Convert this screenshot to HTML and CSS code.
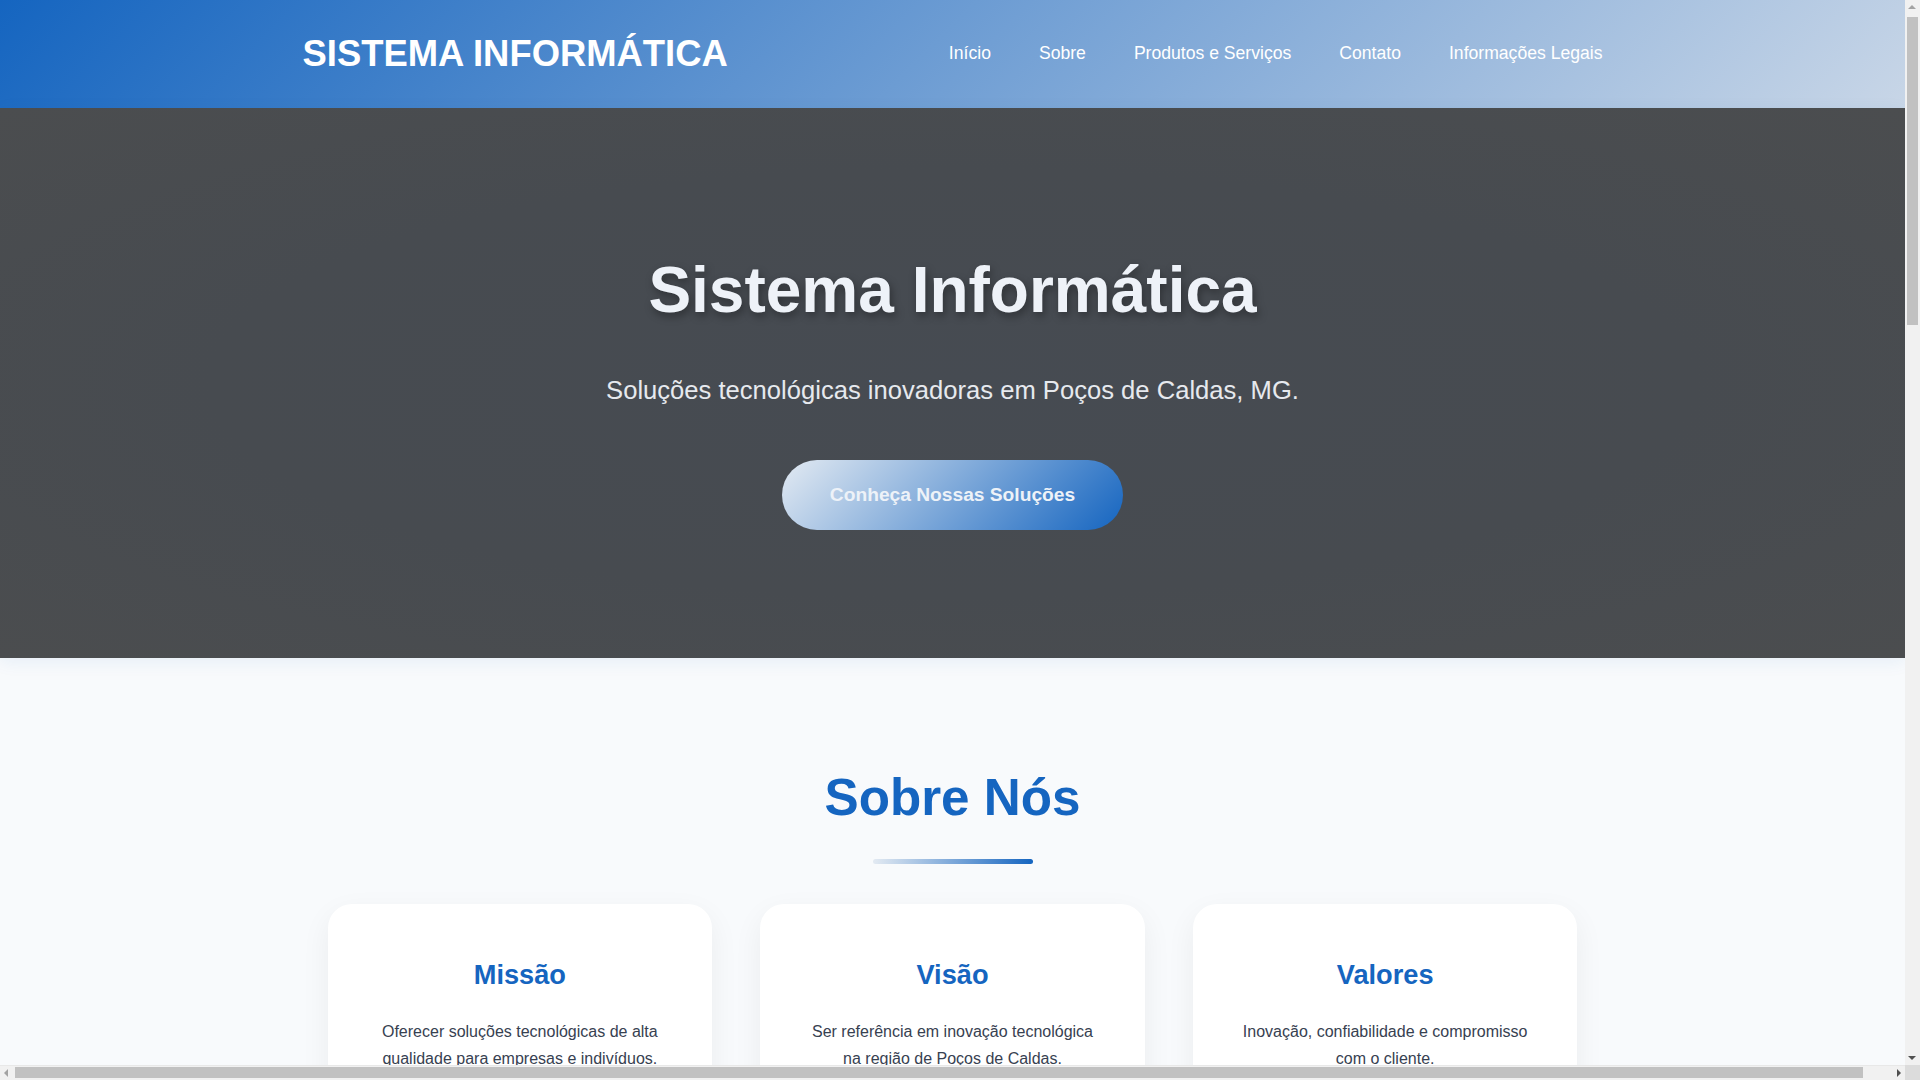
FILE: index.html
```html
<!DOCTYPE html>
<html lang="pt-BR">
<head>
<meta charset="utf-8">
<title>Sistema Informática</title>
<link rel="stylesheet" href="styles.css">
</head>
<body>
<header class="site-header">
  <div class="container header-inner">
    <div class="logo">SISTEMA INFORMÁTICA</div>
    <nav class="nav">
      <a href="#inicio">Início</a>
      <a href="#sobre">Sobre</a>
      <a href="#produtos">Produtos e Serviços</a>
      <a href="#contato">Contato</a>
      <a href="#legal">Informações Legais</a>
    </nav>
  </div>
</header>

<section class="hero" id="inicio">
  <h1 class="hero-title">Sistema Informática</h1>
  <p class="hero-subtitle">Soluções tecnológicas inovadoras em Poços de Caldas, MG.</p>
  <div class="hero-actions">
    <a class="btn" href="#produtos">Conheça Nossas Soluções</a>
  </div>
</section>

<section class="about" id="sobre">
  <h2 class="section-title">Sobre Nós</h2>
  <div class="title-bar"></div>
  <div class="cards">
    <div class="card">
      <h3>Missão</h3>
      <p>Oferecer soluções tecnológicas de alta qualidade para empresas e indivíduos.</p>
    </div>
    <div class="card">
      <h3>Visão</h3>
      <p>Ser referência em inovação tecnológica na região de Poços de Caldas.</p>
    </div>
    <div class="card">
      <h3>Valores</h3>
      <p>Inovação, confiabilidade e compromisso com o cliente.</p>
    </div>
  </div>
</section>

<section class="products" id="produtos">
  <h2 class="section-title">Produtos e Serviços</h2>
  <div class="title-bar"></div>
  <div class="cards">
    <div class="card">
      <h3>Desenvolvimento</h3>
      <p>Sistemas sob medida, aplicativos web e soluções integradas para o seu negócio.</p>
    </div>
    <div class="card">
      <h3>Suporte Técnico</h3>
      <p>Manutenção de computadores, redes e atendimento rápido e eficiente.</p>
    </div>
    <div class="card">
      <h3>Consultoria</h3>
      <p>Planejamento de infraestrutura e transformação digital para empresas.</p>
    </div>
    <div class="card">
      <h3>Hospedagem</h3>
      <p>Servidores, e-mails corporativos e backup em nuvem com segurança.</p>
    </div>
    <div class="card">
      <h3>Segurança</h3>
      <p>Proteção de dados, firewalls e monitoramento contínuo.</p>
    </div>
    <div class="card">
      <h3>Treinamento</h3>
      <p>Capacitação de equipes no uso de ferramentas e sistemas.</p>
    </div>
  </div>
</section>

<section class="contact" id="contato">
  <h2 class="section-title">Contato</h2>
  <div class="title-bar"></div>
  <div class="contact-box">
    <p>Poços de Caldas, MG</p>
    <p>contato@sistemainformatica.com.br</p>
    <p>(35) 3700-0000</p>
  </div>
</section>

<footer class="site-footer" id="legal">
  <p>© 2024 Sistema Informática. Todos os direitos reservados.</p>
  <p>Informações Legais · Política de Privacidade · Termos de Uso</p>
</footer>

<div class="scrollbar-v" aria-hidden="true">
  <span class="arrow arrow-up"></span>
  <span class="thumb-v"></span>
  <span class="arrow arrow-down"></span>
</div>
<div class="scrollbar-h" aria-hidden="true">
  <span class="arrow arrow-left"></span>
  <span class="thumb-h"></span>
  <span class="arrow arrow-right"></span>
</div>
<div class="scrollbar-corner" aria-hidden="true"></div>
</body>
</html>
```

FILE: styles.css
```css
* {
  box-sizing: border-box;
  margin: 0;
  padding: 0;
}

body {
  font-family: "Liberation Sans", Arial, sans-serif;
  line-height: 1.7;
  color: #374151;
  background: #f8fafc;
  margin-right: 15px;
}

.container {
  width: 100%;
  max-width: 1300px;
  margin: 0 auto;
}

/* Header */
.site-header {
  height: 108px;
  display: flex;
  align-items: center;
  background: linear-gradient(135deg, #1565c0 0%, #c8d6e7 100%);
}

.header-inner {
  display: flex;
  justify-content: space-between;
  align-items: center;
}

.logo {
  font-size: 36.4px;
  font-weight: 700;
  line-height: 1.2;
  color: #ffffff;
}

.nav {
  display: flex;
  gap: 48px;
}

.nav a {
  color: #ffffff;
  text-decoration: none;
  font-size: 17.6px;
  line-height: 1.2;
}

/* Hero */
.hero {
  padding: 144px 20px 128px;
  text-align: center;
  background: radial-gradient(ellipse at center, #464b52 0%, #474b50 55%, #4b4d4f 100%);
  box-shadow: 0 4px 16px rgba(21, 101, 192, 0.08);
  position: relative;
}

.hero-title {
  font-size: 64px;
  line-height: 1.2;
  font-weight: 700;
  color: #eef2f8;
  text-shadow: 2px 4px 8px rgba(0, 0, 0, 0.35);
  margin-bottom: 40.5px;
}

.hero-subtitle {
  font-size: 25.6px;
  line-height: 1.7;
  color: #e6e9ee;
  margin-bottom: 47.7px;
}

.hero-actions {
  display: flex;
  justify-content: center;
}

.btn {
  display: block;
  padding: 24px 48px;
  font-size: 19.2px;
  line-height: 22px;
  font-weight: 700;
  color: #edf2f8;
  text-decoration: none;
  border-radius: 50px;
  background: linear-gradient(135deg, #e3eaf2 0%, #1565c0 100%);
}

/* Sections */
.about,
.products,
.contact {
  padding: 109px 20px 96px;
}

.section-title {
  font-size: 51.2px;
  line-height: 1.2;
  font-weight: 700;
  color: #1565c0;
  text-align: center;
}

.title-bar {
  width: 160px;
  height: 5px;
  margin: 30.5px auto 0;
  border-radius: 3px;
  background: linear-gradient(90deg, #e3eaf2 0%, #1565c0 100%);
}

.cards {
  max-width: 1250px;
  margin: 39.5px auto 0;
  display: grid;
  grid-template-columns: repeat(3, 1fr);
  gap: 48px;
}

.card {
  background: #ffffff;
  border-radius: 24px;
  padding: 48px;
  text-align: center;
  box-shadow: 0 10px 30px rgba(0, 0, 0, 0.06);
}

.card h3 {
  font-size: 27.2px;
  line-height: 1.7;
  font-weight: 700;
  color: #1565c0;
  margin-bottom: 20px;
}

.card p {
  font-size: 16px;
  line-height: 1.7;
  color: #374151;
}

.products {
  background: #ffffff;
}

.contact-box {
  max-width: 700px;
  margin: 39.5px auto 0;
  padding: 48px;
  background: #ffffff;
  border-radius: 24px;
  text-align: center;
  box-shadow: 0 10px 30px rgba(0, 0, 0, 0.06);
  font-size: 18px;
}

.site-footer {
  padding: 48px 20px;
  text-align: center;
  color: #e6e9ee;
  background: #474b50;
  font-size: 15px;
}

/* Browser scrollbars as shown in the capture */
.scrollbar-v {
  position: fixed;
  top: 0;
  right: 0;
  width: 15px;
  height: calc(100vh - 15px);
  background: #f1f1f1;
  z-index: 10;
}

.thumb-v {
  position: absolute;
  top: 17px;
  left: 2px;
  width: 11px;
  height: 308px;
  background: #c1c1c1;
}

.scrollbar-h {
  position: fixed;
  left: 0;
  bottom: 0;
  width: calc(100vw - 15px);
  height: 15px;
  background: #f1f1f1;
  border-top: 1px solid #e8e8e8;
  z-index: 10;
}

.thumb-h {
  position: absolute;
  top: 1px;
  left: 15px;
  width: 1848px;
  height: 11px;
  background: #c1c1c1;
}

.scrollbar-corner {
  position: fixed;
  right: 0;
  bottom: 0;
  width: 15px;
  height: 15px;
  background: #dcdcdc;
  z-index: 10;
}

.arrow {
  position: absolute;
  width: 0;
  height: 0;
  border-style: solid;
}

.arrow-up {
  top: 5px;
  left: 3px;
  border-width: 0 4px 4px 4px;
  border-color: transparent transparent #a3a3a3 transparent;
}

.arrow-down {
  bottom: 5px;
  left: 3px;
  border-width: 4px 4px 0 4px;
  border-color: #505050 transparent transparent transparent;
}

.arrow-left {
  left: 4px;
  top: 3px;
  border-width: 4px 4px 4px 0;
  border-color: transparent #a3a3a3 transparent transparent;
}

.arrow-right {
  right: 4px;
  top: 3px;
  border-width: 4px 0 4px 4px;
  border-color: transparent transparent transparent #505050;
}
```
